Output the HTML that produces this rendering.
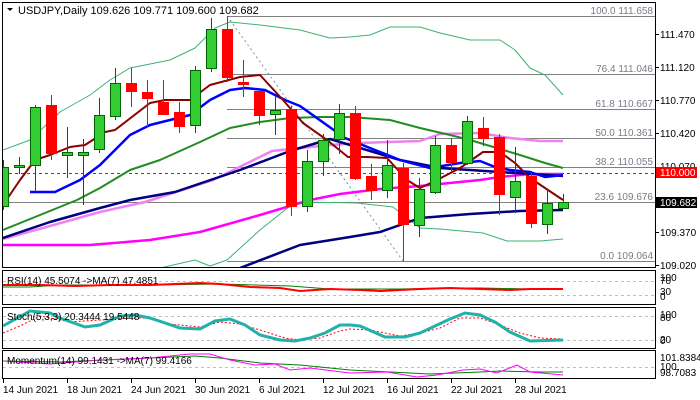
<!DOCTYPE html>
<html><head><meta charset="utf-8"><style>
html,body{margin:0;padding:0;background:#fff;}
svg{display:block;font-family:"Liberation Sans",sans-serif;}
</style></head><body>
<svg width="700" height="400" viewBox="0 0 700 400" xmlns="http://www.w3.org/2000/svg">
<rect width="700" height="400" fill="#fff"/>
<defs><clipPath id="m"><rect x="3" y="3" width="652" height="264"/></clipPath></defs>
<g stroke="#808080" stroke-width="1">
<line x1="227" y1="16.5" x2="655" y2="16.5"/>
<line x1="227" y1="74.5" x2="655" y2="74.5"/>
<line x1="227" y1="109.5" x2="655" y2="109.5"/>
<line x1="227" y1="138.5" x2="655" y2="138.5"/>
<line x1="227" y1="167.5" x2="655" y2="167.5"/>
<line x1="3" y1="202.5" x2="655" y2="202.5"/>
<line x1="227" y1="261.5" x2="655" y2="261.5"/>
</g>
<g font-size="10" fill="#7a7a8a" text-anchor="end">
<text x="653" y="14">100.0 111.658</text>
<text x="653" y="72">76.4 111.046</text>
<text x="653" y="107">61.8 110.667</text>
<text x="653" y="136">50.0 110.361</text>
<text x="653" y="165">38.2 110.055</text>
<text x="653" y="200">23.6 109.676</text>
<text x="653" y="259">0.0 109.064</text>
</g>
<line x1="3" y1="173.5" x2="655" y2="173.5" stroke="#ff0000" stroke-dasharray="3,3"/>
<line x1="230" y1="20" x2="403" y2="261" stroke="#8090a0" stroke-dasharray="2,3"/>
<g clip-path="url(#m)" fill="none" stroke-linejoin="round">
<polyline stroke="#3cb371" stroke-width="1" points="3,150 30,140 60,112 90,95 110,80 130,68 170,60 195,48 215,28 230,22 260,25 300,30 330,38 350,37 370,35 390,27 420,27 440,33 470,40 500,40 515,50 530,68 545,75 563,95"/>
<polyline stroke="#3cb371" stroke-width="1" points="160,268 195,260 210,266 227,260 260,230 290,206 300,202 357,203 393,207 420,228 440,229 483,233 507,241 540,241 563,239"/>
<polyline stroke="#000080" stroke-width="2.5" points="240,268 300,245 350,237 380,232 420,218 470,214 520,211 563,210"/>
<polyline stroke="#ff00ff" stroke-width="2.5" points="3,245 90,245 150,240 200,232 260,215 290,206 310,200 340,194 380,189 420,186 450,183 480,180 500,177 530,174 563,174"/>
<polyline stroke="#ee82ee" stroke-width="2.5" points="3,239 50,226 100,212 145,202 213,180 272,151 300,148 330,145 360,143 420,141 440,134 480,133 510,138 540,141 563,141"/>
<polyline stroke="#000080" stroke-width="2.5" points="3,238 50,222 100,208 130,200 175,192 240,170 290,151 330,139 400,160 440,168 500,172 563,176"/>
<polyline stroke="#228b22" stroke-width="2" points="3,230 40,215 77,200 100,188 130,170 160,160 200,142 230,128 260,122 290,118 320,117 350,117 390,120 420,128 450,135 470,140 490,146 520,155 545,163 563,168"/>
<polyline stroke="#0000ff" stroke-width="2.5" points="30,192 55,192 80,180 100,165 130,135 150,125 170,120 190,115 210,100 230,90 245,88 265,90 285,100 300,106 345,138 380,152 400,160 430,168 460,163 480,161 495,167 510,170 530,172 545,177 563,175"/>
<polyline stroke="#8b0000" stroke-width="2" points="3,205 20,180 35,160 50,155 70,147 85,145 105,132 115,130 150,103 165,100 190,100 210,85 240,77 260,75 283,100 303,123 327,140 348,157 367,157 387,158 407,180 420,188 437,180 460,168 483,152 500,152 515,163 530,178 545,188 563,200"/>
</g>
<g clip-path="url(#m)">
<g stroke-width="1">
<line x1="3.5" y1="160" x2="3.5" y2="210" stroke="#006400"/>
<line x1="19.5" y1="157" x2="19.5" y2="174" stroke="#006400"/>
<line x1="35.5" y1="105" x2="35.5" y2="192" stroke="#006400"/>
<line x1="51.5" y1="95" x2="51.5" y2="160" stroke="#b22222"/>
<line x1="67.5" y1="127" x2="67.5" y2="178" stroke="#006400"/>
<line x1="83.5" y1="139" x2="83.5" y2="205" stroke="#006400"/>
<line x1="99.5" y1="98" x2="99.5" y2="153" stroke="#006400"/>
<line x1="115.5" y1="68" x2="115.5" y2="120" stroke="#006400"/>
<line x1="131.5" y1="68" x2="131.5" y2="107" stroke="#b22222"/>
<line x1="147.5" y1="80" x2="147.5" y2="127" stroke="#b22222"/>
<line x1="163.5" y1="80" x2="163.5" y2="115" stroke="#b22222"/>
<line x1="179.5" y1="102" x2="179.5" y2="133" stroke="#b22222"/>
<line x1="195.5" y1="66" x2="195.5" y2="133" stroke="#006400"/>
<line x1="211.5" y1="18" x2="211.5" y2="72" stroke="#006400"/>
<line x1="227.5" y1="16" x2="227.5" y2="82" stroke="#b22222"/>
<line x1="243.5" y1="60" x2="243.5" y2="97" stroke="#b22222"/>
<line x1="259.5" y1="90" x2="259.5" y2="125" stroke="#b22222"/>
<line x1="275.5" y1="96" x2="275.5" y2="135" stroke="#006400"/>
<line x1="291.5" y1="106" x2="291.5" y2="216" stroke="#b22222"/>
<line x1="307.5" y1="150" x2="307.5" y2="212" stroke="#006400"/>
<line x1="323.5" y1="134" x2="323.5" y2="176" stroke="#006400"/>
<line x1="339.5" y1="104" x2="339.5" y2="154" stroke="#006400"/>
<line x1="355.5" y1="106" x2="355.5" y2="180" stroke="#b22222"/>
<line x1="371.5" y1="164" x2="371.5" y2="200" stroke="#b22222"/>
<line x1="387.5" y1="140" x2="387.5" y2="198" stroke="#006400"/>
<line x1="403.5" y1="163" x2="403.5" y2="261" stroke="#b22222"/>
<line x1="419.5" y1="178" x2="419.5" y2="237" stroke="#006400"/>
<line x1="435.5" y1="136" x2="435.5" y2="194" stroke="#006400"/>
<line x1="451.5" y1="138" x2="451.5" y2="172" stroke="#b22222"/>
<line x1="467.5" y1="116" x2="467.5" y2="165" stroke="#006400"/>
<line x1="483.5" y1="117" x2="483.5" y2="146" stroke="#b22222"/>
<line x1="499.5" y1="134" x2="499.5" y2="215" stroke="#b22222"/>
<line x1="515.5" y1="147" x2="515.5" y2="213" stroke="#006400"/>
<line x1="531.5" y1="173" x2="531.5" y2="228" stroke="#b22222"/>
<line x1="547.5" y1="190" x2="547.5" y2="234" stroke="#006400"/>
<line x1="563.5" y1="194" x2="563.5" y2="209" stroke="#006400"/>
</g>
<g fill="#32cd32" stroke="#006400" stroke-width="1">
<rect x="-1.5" y="167.5" width="10" height="39"/>
<rect x="14.5" y="165.5" width="10" height="2"/>
<rect x="30.5" y="107.5" width="10" height="58"/>
<rect x="62.5" y="152.5" width="10" height="3"/>
<rect x="78.5" y="152.5" width="10" height="3"/>
<rect x="94.5" y="115.5" width="10" height="34"/>
<rect x="110.5" y="83.5" width="10" height="33"/>
<rect x="190.5" y="70.5" width="10" height="55"/>
<rect x="206.5" y="29.5" width="10" height="39"/>
<rect x="270.5" y="110.5" width="10" height="4"/>
<rect x="302.5" y="161.5" width="10" height="45"/>
<rect x="318.5" y="140.5" width="10" height="21"/>
<rect x="334.5" y="113.5" width="10" height="26"/>
<rect x="382.5" y="165.5" width="10" height="25"/>
<rect x="414.5" y="189.5" width="10" height="36"/>
<rect x="430.5" y="145.5" width="10" height="47"/>
<rect x="462.5" y="121.5" width="10" height="42"/>
<rect x="510.5" y="181.5" width="10" height="16"/>
<rect x="542.5" y="203.5" width="10" height="21"/>
<rect x="558.5" y="202.5" width="10" height="6"/>
</g>
<g fill="#ff0000" stroke="#ff0000" stroke-width="1">
<rect x="46.5" y="105.5" width="10" height="48"/>
<rect x="126.5" y="83.5" width="10" height="8"/>
<rect x="142.5" y="92.5" width="10" height="6"/>
<rect x="158.5" y="102.5" width="10" height="12"/>
<rect x="174.5" y="112.5" width="10" height="14"/>
<rect x="222.5" y="29.5" width="10" height="48"/>
<rect x="238.5" y="82.5" width="10" height="2"/>
<rect x="254.5" y="91.5" width="10" height="24"/>
<rect x="286.5" y="109.5" width="10" height="97"/>
<rect x="350.5" y="113.5" width="10" height="65"/>
<rect x="366.5" y="176.5" width="10" height="14"/>
<rect x="398.5" y="168.5" width="10" height="56"/>
<rect x="446.5" y="145.5" width="10" height="17"/>
<rect x="478.5" y="128.5" width="10" height="10"/>
<rect x="494.5" y="137.5" width="10" height="57"/>
<rect x="526.5" y="176.5" width="10" height="47"/>
</g>
</g>
<polygon points="7,8 13,8 10,11" fill="#000"/>
<text x="18" y="14" font-size="11" fill="#000">USDJPY,Daily  109.626 109.771 109.600 109.682</text>
<g stroke="#c0c0c0" stroke-dasharray="3,3">
<line x1="3" y1="281.5" x2="655" y2="281.5"/>
<line x1="3" y1="295.5" x2="655" y2="295.5"/>
<line x1="3" y1="316.5" x2="655" y2="316.5"/>
<line x1="3" y1="340.5" x2="655" y2="340.5"/>
<line x1="3" y1="367.5" x2="655" y2="367.5"/>
</g>
<polyline fill="none" stroke="#008000" stroke-width="1" points="3,287 30,287 60,285 150,285 220,284 290,286 330,289 400,289 450,288 480,288 530,289 563,289"/>
<polyline fill="none" stroke="#ff0000" stroke-width="2" points="3,285 40,285 75,286 110,285 150,285 200,283 220,284 250,287 280,288 300,291 330,289 360,290 380,291 420,289 450,288 480,289 510,290 530,289 563,289"/>
<text x="7" y="284" font-size="10" fill="#000">RSI(14) 45.5074  -&gt;MA(7) 47.4851</text>
<polyline fill="none" stroke="#ff0000" stroke-width="1" stroke-dasharray="2,2" points="3,333 20,326 40,316 70,322 100,320 130,318 150,318 170,324 200,327 220,322 240,324 260,330 285,338 300,340 320,338 340,331 350,329 370,330 400,336 420,333 440,328 460,318 480,318 500,325 520,333 540,338 563,339"/>
<polyline fill="none" stroke="#20b2aa" stroke-width="3" points="3,326 30,311 50,313 60,318 85,327 100,325 120,316 135,315 150,318 180,328 200,329 215,321 230,319 245,325 260,335 280,340 295,341 310,338 325,333 340,325 350,325 360,326 385,337 405,337 420,333 450,319 465,313 480,315 495,322 510,332 530,341 563,340"/>
<text x="7" y="320" font-size="10" fill="#000">Stoch(5,3,3) 20.3444 19.5448</text>
<polyline fill="none" stroke="#008000" stroke-width="1" points="3,361 60,362 150,358 195,356 220,358 260,363 300,365 350,370 390,372 430,374 480,372 500,371 540,372 563,372"/>
<polyline fill="none" stroke="#ff00ff" stroke-width="1" points="3,361 50,364 100,360 150,358 190,354 210,354 230,360 255,365 275,364 290,370 310,368 350,373 387,372 417,377 437,375 463,370 480,369 497,373 517,365 530,372 563,375"/>
<text x="7" y="364" font-size="10" fill="#000">Momentum(14) 99.1431  -&gt;MA(7) 99.4166</text>
<g fill="none" stroke="#000" stroke-width="1">
<rect x="2.5" y="2.5" width="653" height="265"/>
<rect x="2.5" y="270.5" width="653" height="34"/>
<rect x="2.5" y="307.5" width="653" height="41"/>
<rect x="2.5" y="350.5" width="653" height="28"/>
</g>
<g stroke="#000">
<line x1="655" y1="34.5" x2="659" y2="34.5"/>
<line x1="655" y1="67.5" x2="659" y2="67.5"/>
<line x1="655" y1="100.5" x2="659" y2="100.5"/>
<line x1="655" y1="133.5" x2="659" y2="133.5"/>
<line x1="655" y1="232.5" x2="659" y2="232.5"/>
<line x1="655" y1="265.5" x2="659" y2="265.5"/>
</g>
<g font-size="10" fill="#000">
<text x="660" y="38">111.470</text>
<text x="660" y="71">111.120</text>
<text x="660" y="104">110.770</text>
<text x="660" y="137">110.420</text>
<text x="660" y="170">110.070</text>
<text x="660" y="236">109.370</text>
<text x="660" y="269">109.020</text>
<text x="660" y="281">100</text>
<text x="660" y="284">70</text>
<text x="660" y="295">30</text>
<text x="660" y="300">0</text>
<text x="660" y="318">100</text>
<text x="660" y="321">80</text>
<text x="660" y="343">20</text>
<text x="660" y="344">0</text>
<text x="660" y="361">101.8384</text>
<text x="660" y="370">100</text>
<text x="660" y="376">98.7083</text>
</g>
<rect x="656" y="167" width="41" height="11" fill="#ff0000"/>
<text x="660" y="176" font-size="10" fill="#fff">110.000</text>
<rect x="656" y="197" width="41" height="11" fill="#000"/>
<text x="660" y="206" font-size="10" fill="#fff">109.682</text>
<g stroke="#000">
<line x1="3.5" y1="379" x2="3.5" y2="383"/><line x1="67.5" y1="379" x2="67.5" y2="383"/>
<line x1="131.5" y1="379" x2="131.5" y2="383"/><line x1="195.5" y1="379" x2="195.5" y2="383"/>
<line x1="259.5" y1="379" x2="259.5" y2="383"/><line x1="323.5" y1="379" x2="323.5" y2="383"/>
<line x1="387.5" y1="379" x2="387.5" y2="383"/><line x1="451.5" y1="379" x2="451.5" y2="383"/>
<line x1="515.5" y1="379" x2="515.5" y2="383"/>
</g>
<g font-size="10" fill="#000">
<text x="3" y="393">14 Jun 2021</text>
<text x="67" y="393">18 Jun 2021</text>
<text x="131" y="393">24 Jun 2021</text>
<text x="195" y="393">30 Jun 2021</text>
<text x="259" y="393">6 Jul 2021</text>
<text x="323" y="393">12 Jul 2021</text>
<text x="387" y="393">16 Jul 2021</text>
<text x="451" y="393">22 Jul 2021</text>
<text x="515" y="393">28 Jul 2021</text>
</g>
</svg>
</body></html>
